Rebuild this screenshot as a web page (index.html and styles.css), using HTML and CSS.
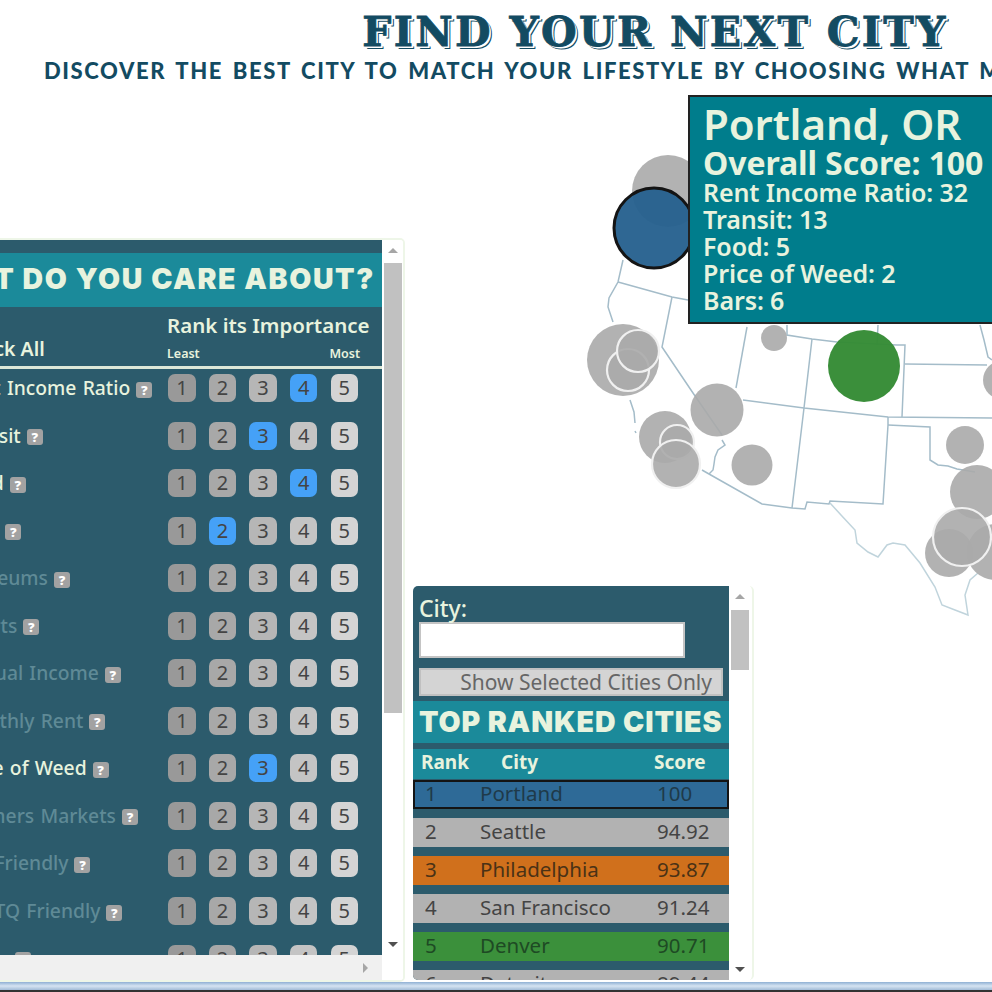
FILE: index.html
```html
<!DOCTYPE html>
<html lang="en">
<head>
  <meta charset="UTF-8">
  <title>Find Your Next City</title>
  <link rel="stylesheet" href="styles.css">
</head>
<body>
  <header class="top">
    <h1>Find Your Next City</h1>
    <p>Discover the best city to match your lifestyle by choosing what matters most to you</p>
  </header>

  <main class="stage">
    <svg class="map" width="992" height="892" viewBox="0 90 992 892">
      <g class="borders">
        <path d="M623 260L618 282L609 298L608 307L613 322"/>
        <path d="M618 282L672 297L688 300"/>
        <path d="M672 297L662 347L693 393L722 435"/>
        <path d="M630 400L634 412L635 423M635 431L636 433"/>
        <path d="M747 327L736 388"/>
        <path d="M787 325L787 335L812 339L837 342L897 345L905 345L902 417"/>
        <path d="M812 339L804 408L792 508"/>
        <path d="M743 400L804 408L888 417L992 418"/>
        <path d="M888 417L888 425L883 504L830 501L829 504L807 502L805 509L792 508L762 504L709 474L702 470"/>
        <path d="M722 440L725 445L718 450L715 457L714 464L713 470L709 474"/>
        <path d="M888 425L930 427L930 460L938 465L948 466L957 469L975 472"/>
        <path d="M905 364L987 365"/>
        <path d="M878 325L877 345"/>
        <path d="M980 325L984 340L988 357L992 360"/>
        <path class="thin" d="M830 503L841 515L855 530L857 543L868 552L878 557L887 545L893 543L905 545L920 563L935 587L942 605L955 610L968 615L965 595L970 580L978 573"/>
      </g>
      <g class="dots">
        <circle cx="668" cy="191" r="36"/>
        <circle cx="623" cy="360" r="36"/>
        <circle class="ring" cx="628" cy="370" r="21"/>
        <circle class="ring" cx="638" cy="351" r="21"/>
        <circle cx="774" cy="338" r="13"/>
        <circle cx="717" cy="410" r="26.5"/>
        <circle cx="665" cy="437" r="26"/>
        <circle class="ring" cx="677" cy="442" r="17"/>
        <circle class="ring" cx="676" cy="464" r="24"/>
        <circle cx="752" cy="465" r="20.5"/>
        <circle cx="965" cy="445" r="19"/>
        <circle cx="1002" cy="380" r="19"/>
        <circle cx="977" cy="492" r="27"/>
        <circle cx="949" cy="553" r="24"/>
        <circle cx="995" cy="552" r="28"/>
        <circle class="ring" cx="962" cy="537" r="29"/>
        <circle class="green" cx="864" cy="366" r="36"/>
        <circle class="blue" cx="654" cy="228" r="40"/>
      </g>
    </svg>

    <div class="tip">
      <div class="tip-city">Portland, OR</div>
      <div class="tip-score">Overall Score: 100</div>
      <div>Rent Income Ratio: 32</div>
      <div>Transit: 13</div>
      <div>Food: 5</div>
      <div>Price of Weed: 2</div>
      <div>Bars: 6</div>
    </div>

    <section class="box care">
      <div class="view">
        <h2 class="band care-band">What do you care about?</h2>
        <div class="rank-head">
          <div class="check-all">Check All</div>
          <div class="rank-title">
            <div>Rank its Importance</div>
            <div class="ends"><span>Least</span><span>Most</span></div>
          </div>
        </div>
        <div id="factors"></div>
      </div>
      <div class="vbar">
        <span class="arrow up"></span>
        <span class="thumb care-thumb"></span>
        <span class="arrow down"></span>
      </div>
      <div class="hbar"><span class="arrow right"></span></div>
      <div class="corner"></div>
    </section>

    <section class="box ranked">
      <div class="view">
        <label class="city-label" for="city">City:</label>
        <input class="city-input" id="city" type="text">
        <button class="only" type="button">Show Selected Cities Only</button>
        <h2 class="band ranked-band">Top Ranked Cities</h2>
        <div class="city-head"><span>Rank</span><span>City</span><span>Score</span></div>
        <div class="city-row blue-row"><span>1</span><span>Portland</span><span>100</span></div>
        <div class="city-row"><span>2</span><span>Seattle</span><span>94.92</span></div>
        <div class="city-row orange-row"><span>3</span><span>Philadelphia</span><span>93.87</span></div>
        <div class="city-row"><span>4</span><span>San Francisco</span><span>91.24</span></div>
        <div class="city-row green-row"><span>5</span><span>Denver</span><span>90.71</span></div>
        <div class="city-row"><span>6</span><span>Detroit</span><span>89.44</span></div>
      </div>
      <div class="vbar">
        <span class="arrow up"></span>
        <span class="thumb ranked-thumb"></span>
        <span class="arrow down"></span>
      </div>
    </section>
  </main>

  <div class="taskbar"></div>

  <script>
    // name, rank picked (0 = factor is switched off)
    const factors = [
      ['Rent Income Ratio', 4],
      ['Transit', 3],
      ['Food', 4],
      ['Bars', 2],
      ['Museums', 0],
      ['Sports', 0],
      ['Annual Income', 0],
      ['Monthly Rent', 0],
      ['Price of Weed', 3],
      ['Farmers Markets', 0],
      ['Pet Friendly', 0],
      ['LGBTQ Friendly', 0],
      ['Parks', 0]
    ];

    const list = document.getElementById('factors');
    factors.forEach(f => {
      let btns = '';
      for (let i = 1; i <= 5; i++) {
        btns += `<span class="rank r${i}${f[1] === i ? ' on' : ''}">${i}</span>`;
      }
      const row = document.createElement('div');
      row.className = 'factor' + (f[1] ? '' : ' off');
      row.innerHTML = `
        <div class="factor-name"><span>${f[0]}</span><b class="help">?</b></div>
        <div class="ranks">${btns}</div>
      `;
      list.appendChild(row);
    });
  </script>
</body>
</html>
```

FILE: styles.css
```css
html, body { margin: 0; height: 992px; overflow: hidden; }
body { width: 992px; background: white; font-family: "Noto Sans", "Lato", sans-serif; color: #e8f3de; position: relative; }

.top { height: 90px; overflow: hidden; color: #134b62; }
.top h1 { margin: 0; padding-top: 9px; text-align: center; padding-left: 318px; font: bold 41px/46px "DejaVu Serif", serif; text-transform: uppercase; letter-spacing: 2.3px; white-space: nowrap; -webkit-text-stroke: .8px #134b62; text-shadow: 2px 2px 0 white, 3px 3px 0 #134b62; }
.top p { margin: 3px 0 0 44px; font-family: "Lato", sans-serif; font-size: 22px; line-height: 26px; font-weight: 900; text-transform: uppercase; letter-spacing: 1.6px; word-spacing: 3px; white-space: nowrap; }

.stage { position: relative; height: 892px; display: flex; align-items: flex-end; gap: 8px; }
.map { position: absolute; left: 0; top: 0; }
.borders path { fill: none; stroke: #a4bcc9; stroke-width: 1.5; }
.borders .thin { stroke: #c0d4dc; }
.dots circle { fill: #aaa; fill-opacity: .9; }
.dots .ring { stroke: #f0f0f0; stroke-width: 2.2; }
.dots .green { fill: #358b35; fill-opacity: .97; }
.dots .blue { fill: #27618f; fill-opacity: .96; stroke: #141414; stroke-width: 3; }

.tip { position: absolute; left: 688px; top: 5px; width: 320px; height: 229px; box-sizing: border-box; background: #007d8c; border: 2px solid #222; padding: 4px 13px; font-size: 25px; line-height: 27px; font-weight: 600; letter-spacing: -.1px; white-space: nowrap; }
.tip-city { font-size: 42px; line-height: 46px; font-weight: 600; }
.tip-score { font-size: 32px; line-height: 32px; font-weight: 700; }

.box { position: relative; flex: none; display: grid; background: white; border: 2px solid #eef6e8; border-radius: 5px; overflow: hidden; z-index: 1; }
.view { background: #2c5b6c; overflow: hidden; }
.vbar { position: relative; background: white; }
.thumb { position: absolute; left: 2px; width: 18px; background: #c1c1c1; }
.arrow { position: absolute; width: 0; height: 0; border-style: solid; border-color: transparent; }
.arrow.up { left: 6px; top: 8px; border-width: 0 5px 5px; border-bottom-color: #a6a6a6; }
.arrow.down { left: 6px; bottom: 8px; border-width: 5px 5px 0; border-top-color: #505050; }
.arrow.right { right: 14px; top: 8px; border-width: 5px 0 5px 5px; border-left-color: #a6a6a6; }

.band { margin: 0; background: #1b8a9a; color: #e8f3de; font-weight: 900; text-transform: uppercase; white-space: nowrap; font-family: "Inter", "Lato", sans-serif; }

/* left panel */
.care { margin-left: -66px; width: 467px; height: 740px; grid-template-columns: 446px 21px; grid-template-rows: 715px 25px; }
.care-band { margin-top: 13px; height: 54px; line-height: 52px; font-size: 28.5px; letter-spacing: 1.6px; display: flex; justify-content: flex-end; padding-right: 7px; box-sizing: border-box; }
.care-thumb { top: 23px; height: 450px; }
.rank-head { height: 59px; display: flex; justify-content: space-between; border-bottom: 3px solid #dde8d8; padding-right: 11px; font-weight: 600; }
.check-all { padding: 30px 0 0 22px; font-size: 19.5px; line-height: 24px; }
.rank-title { font-size: 20.5px; line-height: 24px; padding-top: 6px; width: 204px; white-space: nowrap; }
.ends { display: flex; justify-content: space-between; font-size: 12.5px; line-height: 16px; padding: 9px 11px 0 0; }

.factor { height: 47.55px; display: flex; justify-content: space-between; padding: 5px 24px 0 22px; box-sizing: border-box; }
.factor-name { font-size: 19.3px; line-height: 30px; word-spacing: 1.2px; display: flex; align-items: center; gap: 6px; height: 28px; font-weight: 500; white-space: nowrap; }
.off .factor-name span { color: #5f8a96; }
.help { width: 16px; height: 16px; border-radius: 3px; background: #a2a2a2; color: white; font-size: 13px; line-height: 16px; text-align: center; font-weight: 900; margin-top: 3px; }
.ranks { display: flex; gap: 13.1px; }
.rank { width: 27.5px; height: 28px; border-radius: 7px; color: #444; font-size: 20px; line-height: 28px; text-align: center; }
.r1 { background: #999; }
.r2 { background: #a8a8a8; }
.r3 { background: #b6b6b6; }
.r4 { background: #c4c4c4; }
.r5 { background: #d4d4d4; }
.rank.on { background: #45a1f7; }

.hbar { background: #f0f0f0; position: relative; }
.corner { background: white; }

/* city panel */
.ranked { margin-bottom: 2px; width: 339px; height: 394px; grid-template-columns: 316px 21px; grid-template-rows: 394px; border-top: 0; border-bottom: 0; border-left: 0; }
.ranked-thumb { top: 24px; height: 60px; }
.city-label { display: block; margin: 8px 0 0 6px; font-size: 23px; line-height: 28px; font-weight: 500; }
.city-input { display: block; margin: 0 0 0 6px; width: 266px; height: 36px; box-sizing: border-box; border: 2px solid #c4c4c4; background: white; padding: 0; }
.only { display: block; margin: 10px 0 0 6px; width: 304px; height: 28px; box-sizing: border-box; border: 2px solid #c0c0c0; background: #d4d4d4; color: #666; font: 400 21px/22px "Noto Sans", sans-serif; padding: 0 9px 0 0; text-align: right; white-space: nowrap; }
.ranked-band { margin-top: 5px; height: 42px; font-size: 28.5px; line-height: 42px; padding-left: 6px; letter-spacing: .9px; }
.city-head { margin-top: 6px; height: 30px; background: #1b8a9a; font-size: 19px; line-height: 27px; font-weight: 700; display: grid; grid-template-columns: 80px 153px 1fr; padding-left: 8px; }
.city-row { height: 29px; margin-bottom: 9px; box-sizing: border-box; background: #b2b2b2; color: #444; font-size: 20.5px; line-height: 27px; display: grid; grid-template-columns: 55px 177px 1fr; padding-left: 12px; white-space: nowrap; }
.blue-row { background: #2e6a97; color: #1f3a4a; border: 2px solid #141414; padding-left: 10px; margin-top: 1px; line-height: 22px; }
.orange-row { background: #d0701c; color: #4a3216; }
.green-row { background: #3b903b; color: #1e4a24; }

.taskbar { position: absolute; left: 0; right: 0; bottom: 0; height: 10px; background: linear-gradient(#8fb0d4, #d6e4f2 40%, #a8c0da 75%, #333 85%); z-index: 2; }
```
